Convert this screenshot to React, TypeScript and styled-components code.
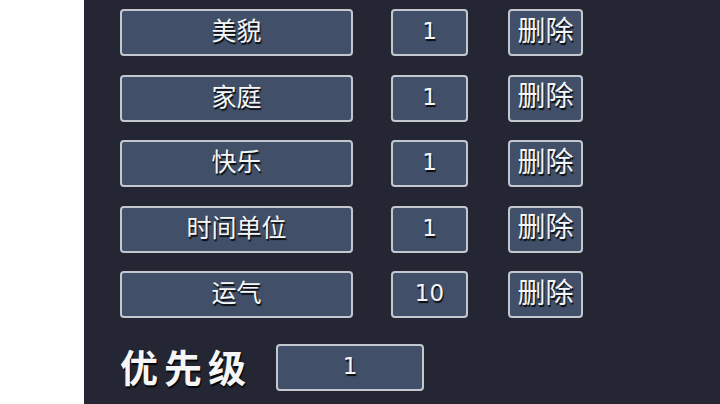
import React from "react";
import styled, { createGlobalStyle } from "styled-components";

const GlobalStyle = createGlobalStyle`
    html, body {
        margin: 0;
        padding: 0;
        background: #ffffff;
    }
    body {
        font-family: "DejaVu Sans", "Noto Sans CJK SC", sans-serif;
    }
`

type attrProp = {
    id: string,
    name: string,
    value: number
}

const attrData: attrProp[] = [
    { id: "beauty", name: "美貌", value: 1 },
    { id: "family", name: "家庭", value: 1 },
    { id: "happy", name: "快乐", value: 1 },
    { id: "time", name: "时间单位", value: 1 },
    { id: "luck", name: "运气", value: 10 }
]

const Page = styled.div`
    display: flex;
    width: 720px;
    height: 404px;
    overflow: hidden;
`

const Margin = styled.div`
    width: 84px;
    flex: none;
    background: #ffffff;
`

const Panel = styled.div`
    flex: 1;
    background: #242733;
    padding: 9px 0 0 36px;
    display: flex;
    flex-direction: column;
`

const List = styled.div`
    display: grid;
    grid-template-columns: 233px 77px 77px;
    grid-auto-rows: 47px;
    column-gap: 38px;
    row-gap: 18.5px;
    & > :nth-child(3n) {
        margin-left: 2px;
    }
`

const Box = styled.div<{ $size: number }>`
    box-sizing: border-box;
    display: flex;
    align-items: center;
    justify-content: center;
    height: 47px;
    padding-bottom: 2px;
    border: 2px solid #c3c7ce;
    border-radius: 4px;
    background: #415068;
    color: #f4f5f7;
    font-size: ${p => p.$size}px;
    line-height: 1;
    text-shadow: 1px 2px 1px rgba(0, 0, 0, 0.85);
    user-select: none;
`

const Priority = styled.div`
    display: flex;
    align-items: center;
    margin-top: 26px;
`

const Label = styled.div`
    font-family: "Noto Sans CJK SC", sans-serif;
    font-size: 38px;
    font-weight: 700;
    letter-spacing: 6px;
    color: #f6f6f6;
    text-shadow: 1px 2px 1px rgba(0, 0, 0, 0.85);
    width: 156px;
    line-height: 1;
    margin-top: -4px;
`

const PriorityBox = styled(Box)`
    width: 148px;
`

export default () => {
    return (
        <Page>
            <GlobalStyle />
            <Margin />
            <Panel>
                <List>
                    {
                        attrData.map((data: attrProp) => (
                            <React.Fragment key={data.id}>
                                <Box $size={25}>{data.name}</Box>
                                <Box $size={23}>{data.value}</Box>
                                <Box $size={28}>删除</Box>
                            </React.Fragment>
                        ))
                    }
                </List>
                <Priority>
                    <Label>优先级</Label>
                    <PriorityBox $size={23}>1</PriorityBox>
                </Priority>
            </Panel>
        </Page>
    )
}
